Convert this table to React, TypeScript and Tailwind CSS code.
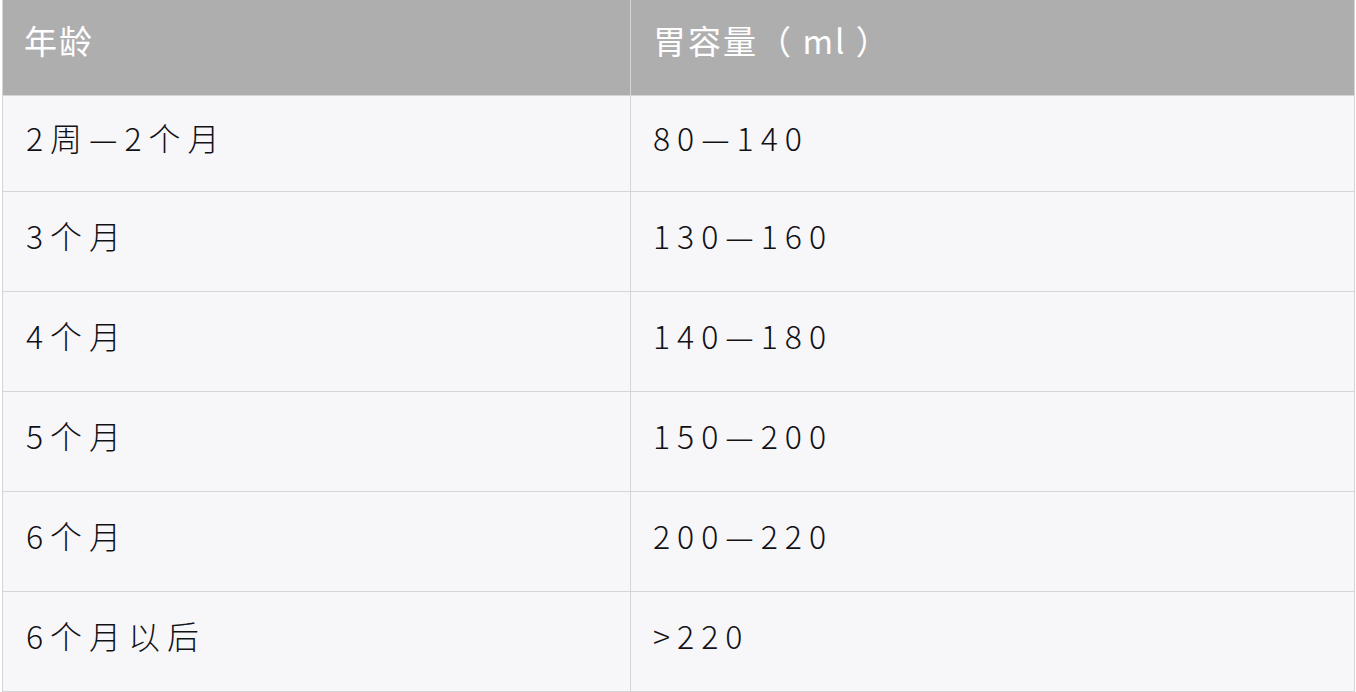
import React from 'react';

const rows: [string, string][] = [
  ['2周—2个月', '80—140'],
  ['3个月', '130—160'],
  ['4个月', '140—180'],
  ['5个月', '150—200'],
  ['6个月', '200—220'],
  ['6个月以后', '>220'],
];

const font = { fontFamily: '"Noto Sans CJK SC", "Noto Sans", sans-serif' };

export default function App() {
  return (
    <div className="w-[1356px] h-[692px] bg-white pl-[2px]" style={font}>
      <div className="w-[1353px] border-l border-r border-b border-[#d4d4d9]">
        {/* header */}
        <div className="flex h-[95px] bg-[#afaeaf] text-white text-[33px] tracking-[2px]">
          <div className="w-[628px] border-r border-[#d4d4d9] flex items-center pl-[21px] pb-[13px]">
            年龄
          </div>
          <div className="flex-1 flex items-center pl-[22px] pb-[13px]">
            胃容量（ ml ）
          </div>
        </div>

        {rows.map(([age, vol], i) => (
          <div
            key={i}
            className={`flex bg-[#f7f7fa] text-[#111116] text-[32px] font-light border-t border-[#d4d4d9] ${
              i === 0 ? 'h-[96px]' : 'h-[100px]'
            }`}
          >
            <div className="w-[628px] border-r border-[#d4d4d9] flex items-center pl-[23px] pb-[14px] tracking-[7px]">
              {age}
            </div>
            <div className="flex-1 flex items-center pl-[22px] pb-[14px] tracking-[7px]">
              {vol}
            </div>
          </div>
        ))}
      </div>
    </div>
  );
}
